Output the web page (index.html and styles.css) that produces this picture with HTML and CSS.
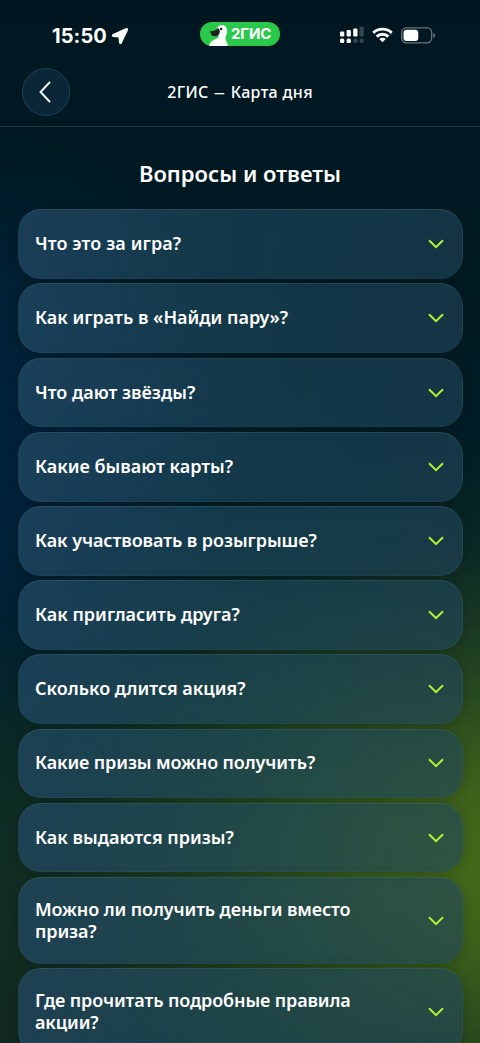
FILE: index.html
```html
<!DOCTYPE html>
<html lang="ru">
<head>
<meta charset="utf-8">
<meta name="viewport" content="width=device-width, initial-scale=1">
<title>2ГИС — Карта дня</title>
<link rel="stylesheet" href="styles.css">
</head>
<body>
<svg width="0" height="0" class="defs" aria-hidden="true">
  <symbol id="chevron" viewBox="0 0 16 10"><path d="M1 1.2 8 8.2 15 1.2" fill="none" stroke="#b2f433" stroke-width="2"/></symbol>
</svg>
<div class="screen">
  <div class="status">
    <div class="status-time">
      <span class="time">15:50</span>
      <svg class="locate" viewBox="0 0 18 18"><path d="M14.900 1.900 2.300 7.800C1.300 8.400 1.500 9.200 2.600 9.300L8.300 9.700l.4 5.600c.1 1.200 1 1.400 1.500.3L16.100 3.100C16.600 2 15.900 1.400 14.900 1.900Z" fill="#fff" stroke="#fff" stroke-width="1.600" stroke-linejoin="round"/></svg>
    </div>
    <div class="pill">
      <svg class="goose" viewBox="0 0 22 24">
        <path d="M1 24C1.500 19.500 6 17.800 9.500 16.200 11 15.400 10.900 13.700 9.400 12.800L8.800 7C9.600 4.500 11.400 3.100 13.700 3.100c3.500 0 5.500 2.400 5.400 6 0 3.700-2 5.600-1.600 8.200.4 2.600 2.400 3.600 2.500 6.700Z" fill="#fff"/>
        <path d="M9.800 6C8.800 8.300 5 9.200 1.400 9.500c.4 1 1 1.400 1.900 1.500-.5.600-.3 1.800.6 2.500 2.200 1.200 5.200.9 6.600-.6 1.700-1.900 2.200-4.700-.7-6.900Z" fill="#17211d"/>
        <circle cx="13.100" cy="7" r="1.200" fill="#17211d"/>
      </svg>
      <span class="pill-text">2ГИС</span>
    </div>
    <div class="status-icons">
      <svg class="signal" viewBox="0 0 24 18" fill="#fff">
        <rect x="0" y="5.500" width="4.300" height="5" rx="1.300"/><rect x="6.600" y="4" width="4.300" height="6.500" rx="1.300"/><rect x="13.200" y="2.500" width="4.300" height="8" rx="1.300"/>
        <rect x="0" y="12.400" width="4.300" height="4.500" rx="1.500"/><rect x="6.600" y="12.400" width="4.300" height="4.500" rx="1.500"/>
        <g fill="#34454f"><rect x="19.500" y=".8" width="4.300" height="9.700" rx="1.300"/><rect x="13.200" y="12.400" width="4.300" height="4.500" rx="2"/><rect x="19.500" y="12.400" width="4.300" height="4.500" rx="2"/></g>
      </svg>
      <svg class="wifi" viewBox="0 0 22 18"><g fill="none" stroke="#fff" stroke-width="3"><path d="M1.300 6.800a14 14 0 0 1 19.400 0"/><path d="M4.900 10.700a8.700 8.700 0 0 1 12.200 0"/></g><path d="m7.600 13.300a4.900 4.900 0 0 1 6.800 0L11 16.700Z" fill="#fff"/></svg>
      <svg class="battery" viewBox="0 0 35 17"><rect x=".7" y=".9" width="30" height="14.900" rx="4.700" fill="none" stroke="#68757d" stroke-width="1.300"/><rect x="2.500" y="2.700" width="14.800" height="11.300" rx="3" fill="#fff"/><path d="M32.300 6v5c2.400-1 2.400-4 0-5Z" fill="#68757d"/></svg>
    </div>
  </div>
  <header class="header">
    <button class="back" aria-label="Назад"><svg viewBox="0 0 12 22"><path d="M11 1 1.500 11 11 21" fill="none" stroke="#f3ffff" stroke-width="1.900"/></svg></button>
    <div class="header-title">2ГИС <span class="dash">–</span> Карта дня</div>
  </header>
  <main>
    <h1>Вопросы и ответы</h1>
    <div class="list">
      <div class="card"><span class="loose">Что это за игра?</span><svg><use href="#chevron"/></svg></div>
      <div class="card"><span>Как играть в «Найди пару»?</span><svg><use href="#chevron"/></svg></div>
      <div class="card"><span>Что дают звёзды?</span><svg><use href="#chevron"/></svg></div>
      <div class="card"><span>Какие бывают карты?</span><svg><use href="#chevron"/></svg></div>
      <div class="card"><span class="snug">Как участвовать в розыгрыше?</span><svg><use href="#chevron"/></svg></div>
      <div class="card"><span>Как пригласить друга?</span><svg><use href="#chevron"/></svg></div>
      <div class="card"><span>Сколько длится акция?</span><svg><use href="#chevron"/></svg></div>
      <div class="card"><span class="tight">Какие призы можно получить?</span><svg><use href="#chevron"/></svg></div>
      <div class="card"><span>Как выдаются призы?</span><svg><use href="#chevron"/></svg></div>
      <div class="card tall"><span class="tight">Можно ли получить деньги вместо<br>приза?</span><svg><use href="#chevron"/></svg></div>
      <div class="card tall"><span class="tight">Где прочитать подробные правила<br>акции?</span><svg><use href="#chevron"/></svg></div>
    </div>
  </main>
</div>
</body>
</html>
```
FILE: styles.css
```css
* { box-sizing: border-box; }
body { margin: 0; background: #001722; }
.defs { display: block; height: 0; }
.screen {
  width: 480px;
  height: 1043px;
  overflow: hidden;
  color: #fff;
  font-family: "Noto Sans", sans-serif;
  background:
    radial-gradient(ellipse 600px 430px at 500px 865px, #446b1a 0%, rgba(62, 99, 26, .94) 20%, rgba(45, 78, 30, .76) 45%, rgba(28, 55, 30, .34) 75%, rgba(20, 45, 30, 0) 100%),
    radial-gradient(ellipse 260px 310px at -20px 430px, #00223b 0%, rgba(0, 34, 59, .8) 40%, rgba(0, 34, 59, 0) 100%),
    linear-gradient(#001722 0, #001b22 30%, #01202a 60%, #0d2a25 82%, #102720 100%);
}
.status {
  height: 64px;
  padding: 4px 44px 0 52px;
  display: grid;
  grid-template-columns: 148px 80px 1fr;
  align-items: center;
}
.status-time { display: flex; align-items: center; gap: 4px; }
.time { font: 700 20px/24px Inter, sans-serif; letter-spacing: .1px; position: relative; top: 2px; }
.locate { width: 18px; height: 18px; margin-top: 3px; }
.pill {
  height: 24px;
  width: 80px;
  border-radius: 12px;
  overflow: hidden;
  background: #2bc94b;
  display: flex;
  align-items: center;
  padding-left: 8px;
}
.goose { width: 22px; height: 24px; }
.pill-text { font: 700 15px/24px Inter, sans-serif; letter-spacing: -.1px; margin-left: 1px; }
.status-icons { display: flex; align-items: center; justify-content: flex-end; gap: 8px; padding-top: 2px; }
.signal { width: 24px; height: 18px; }
.wifi { width: 21px; height: 18px; }
.battery { width: 35px; height: 17px; }
.header {
  height: 63px;
  border-bottom: 1px solid #203540;
  display: grid;
  grid-template-columns: 48px 1fr 48px;
  align-items: center;
  padding: 0 22px 7px;
}
.back {
  width: 48px;
  height: 48px;
  border-radius: 50%;
  border: 1px solid #15445a;
  background: #0b2636;
  padding: 0 2px 0 0;
  display: flex;
  align-items: center;
  justify-content: center;
}
.back svg { width: 12px; height: 22px; }
.header-title { text-align: center; font-size: 16px; font-weight: 500; line-height: 24px; letter-spacing: .35px; }
.dash { display: inline-block; width: 13px; text-align: center; transform: scaleX(1.4); }
h1 { margin: 30px 0 19.300px; text-align: center; font-size: 22px; line-height: 33px; font-weight: 600; }
.list { display: flex; flex-direction: column; gap: 4.5px; padding: 0 17.5px; }
.card {
  flex: none;
  height: 69.7px;
  border-radius: 23px;
  border: 1px solid rgba(120, 175, 190, .07);
  border-top-color: rgba(150, 190, 195, .13);
  background: linear-gradient(100deg, rgba(35, 74, 100, .74), rgba(30, 74, 96, .62) 50%, rgba(34, 70, 92, .6));
  box-shadow: 0 2px 12px rgba(0, 12, 18, .22);
  display: flex;
  align-items: center;
  justify-content: space-between;
  padding: 0 17.500px 2px 16.500px;
  font-size: 18px;
  line-height: 22px;
  font-weight: 600;
}
.card.tall { height: 87px; padding-bottom: 1px; }
.card svg { width: 16px; height: 10px; margin-top: 2px; }
.loose { letter-spacing: .1px; }
.snug { letter-spacing: -.08px; }
.tight { letter-spacing: -.12px; }
```
